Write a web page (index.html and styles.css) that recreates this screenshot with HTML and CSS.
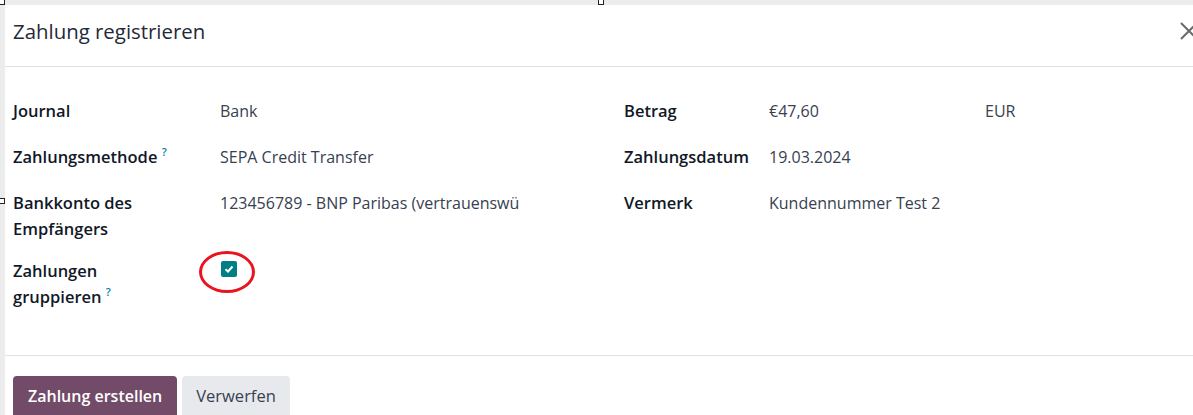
FILE: index.html
```html
<!DOCTYPE html>
<html lang="de">
<head>
<meta charset="utf-8">
<title>Zahlung registrieren</title>
<link rel="stylesheet" href="styles.css">
</head>
<body>
<div class="handle handle-tl"></div>
<div class="handle handle-tm"></div>
<div class="handle handle-ml"></div>
<div class="modal">
  <header class="modal-header">
    <h4 class="modal-title">Zahlung registrieren</h4>
    <button class="btn-close" aria-label="Schließen">
      <svg width="18" height="18" viewBox="0 0 18 18"><path d="M1 1L17 17M17 1L1 17" stroke="#6b6b6b" stroke-width="2" fill="none"/></svg>
    </button>
  </header>
  <main class="modal-body">
    <div class="group group-left">
      <div class="label">Journal</div>
      <div class="value">Bank</div>
      <div class="label">Zahlungsmethode <sup class="help">?</sup></div>
      <div class="value">SEPA Credit Transfer</div>
      <div class="label">Bankkonto des<br>Empfängers</div>
      <div class="value nowrap">123456789 - BNP Paribas (vertrauenswü</div>
      <div class="label row-tight">Zahlungen<br>gruppieren <sup class="help">?</sup></div>
      <div class="value row-tight">
        <span class="check-wrap">
          <span class="checkbox">
            <svg width="10" height="8" viewBox="0 0 10 8"><path d="M1.5 4.2L4 6.5L8.5 1.5" stroke="#fff" stroke-width="2" fill="none"/></svg>
          </span>
          <span class="circle"></span>
        </span>
      </div>
    </div>
    <div class="group group-right">
      <div class="label">Betrag</div>
      <div class="value">€47,60</div>
      <div class="value">EUR</div>
      <div class="label">Zahlungsdatum</div>
      <div class="value span2">19.03.2024</div>
      <div class="label">Vermerk</div>
      <div class="value span2">Kundennummer Test 2</div>
    </div>
  </main>
  <footer class="modal-footer">
    <button class="btn btn-primary">Zahlung erstellen</button>
    <button class="btn btn-secondary">Verwerfen</button>
  </footer>
</div>
</body>
</html>
```
FILE: styles.css
```css
* { box-sizing: border-box; }
html, body { margin: 0; padding: 0; }
body {
  background: #ececec;
  font-family: "Open Sans", "Noto Sans", "DejaVu Sans", sans-serif;
  color: #212529;
  width: 1193px;
  height: 415px;
  overflow: hidden;
  position: relative;
  padding: 5px 0 0 5px;
}
.handle {
  position: absolute;
  width: 6px;
  height: 6px;
  background: #fff;
  border: 1px solid #222;
}
.handle-tl { left: -1px; top: -1px; }
.handle-tm { left: 598px; top: -1px; }
.handle-ml { left: -1px; top: 198px; }
.modal {
  background: #fff;
  height: 420px;
}
.modal-header {
  display: flex;
  align-items: flex-start;
  justify-content: space-between;
  height: 62px;
  padding: 11px 0 0 8px;
  border-bottom: 1px solid #dee2e6;
}
.modal-title {
  margin: 0;
  font-size: 20.4px;
  line-height: 30px;
  font-weight: 400;
  color: #1f2937;
}
.btn-close {
  border: 0;
  background: none;
  padding: 0;
  margin: 6px -5px 0 0;
  display: flex;
}
.modal-body {
  display: grid;
  grid-template-columns: 611px 1fr;
  padding: 31px 0 0 8px;
  height: 289px;
  border-bottom: 1px solid #dee2e6;
}
.group {
  display: grid;
  align-content: start;
  row-gap: 20px;
  font-size: 16px;
  line-height: 26px;
}
.group-left { grid-template-columns: 207px 308px; }
.group-right { grid-template-columns: 145px 216px 100px; }
.label {
  font-weight: 600;
  font-size: 16.5px;
  color: #111827;
  padding-right: 8px;
}
.value { color: #374151; }
.span2 { grid-column: span 2; }
.nowrap { white-space: nowrap; }
.row-tight { margin-top: -4px; }
.help {
  color: #0180a5;
  font-size: 11px;
  font-weight: 600;
  vertical-align: top;
  position: relative;
  top: -5px;
}
.check-wrap {
  position: relative;
  display: inline-block;
  width: 16px;
  height: 16px;
  margin: 3px 0 0 1px;
  vertical-align: top;
}
.checkbox {
  display: flex;
  align-items: center;
  justify-content: center;
  width: 16px;
  height: 16px;
  background: #017e84;
  border-radius: 2px;
}
.circle {
  position: absolute;
  left: -22px;
  top: -10px;
  width: 56px;
  height: 42px;
  border: 3px solid #e8141e;
  border-radius: 50%;
}
.modal-footer {
  display: flex;
  gap: 5px;
  padding: 20px 0 0 8px;
}
.btn {
  border: 0;
  border-radius: 4px 4px 0 0;
  font-family: inherit;
  font-size: 16px;
  height: 40px;
  padding: 0 15px;
  line-height: 40px;
}
.btn-primary {
  background: #714b67;
  color: #fff;
  font-weight: 600;
}
.btn-secondary {
  background: #e7e9ed;
  color: #374151;
  font-size: 16.5px;
  padding: 0 14px;
}
```
